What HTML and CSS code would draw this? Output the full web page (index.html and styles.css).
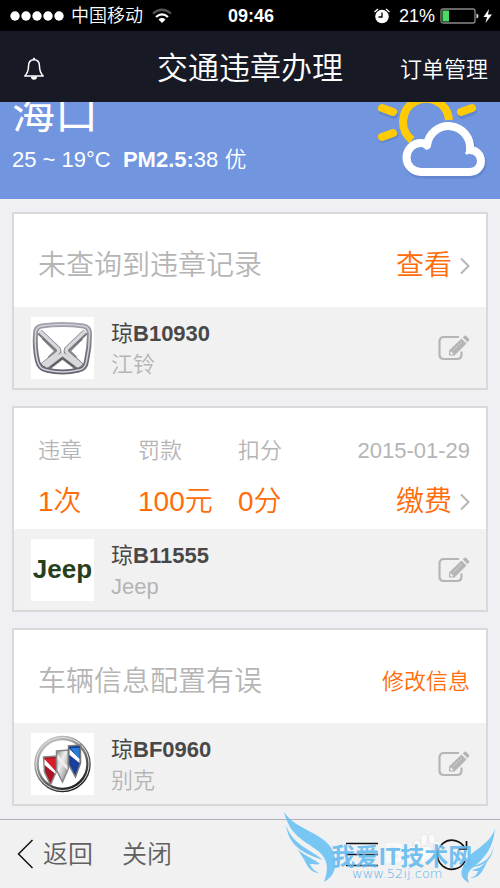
FILE: index.html
```html
<!DOCTYPE html>
<html lang="zh-CN">
<head>
  <meta charset="UTF-8">
  <meta name="viewport" content="width=device-width, initial-scale=1.0">
  <title>交通违章办理</title>
  <link rel="stylesheet" href="styles.css">
</head>
<body>
  <!-- shared icons -->
  <svg class="sprite" aria-hidden="true">
    <symbol id="icon-edit" viewBox="0 0 32 26">
      <path d="M21 2H6Q1.500 2 1.500 6.500v13q0 4.500 4.500 4.500h13q4.500 0 4.500-4.500v-3" fill="none" stroke="#b5b5b5" stroke-width="2.200"/>
      <path d="M11 15.500 23.500 3.500l5 5L16.500 20.500H11z" fill="#b5b5b5"/>
      <path d="m24.800 2.500 1.300-1.400q1-1 2.200 0l2.500 2.500q1 1.200 0 2.200L29.600 7.200z" fill="#b5b5b5"/>
      <path d="m12.500 16 3 3-1 .5h-1.500l-.8-1z" fill="#f1f1f1"/>
      <path d="m15.500 15 8.500-8" stroke="#d8d8d8" stroke-width=".8"/>
    </symbol>
    <symbol id="icon-next" viewBox="0 0 10 18">
      <path d="m1 1.500 7.500 7.500L1 16.500" fill="none" stroke="#b5b5b5" stroke-width="2"/>
    </symbol>
  </svg>

  <div class="status-bar">
    <div class="status-left">
      <svg width="54" height="12" viewBox="0 0 54 12" fill="#fff">
        <circle cx="5" cy="6" r="4.700"/><circle cx="16" cy="6" r="4.700"/><circle cx="27" cy="6" r="4.700"/><circle cx="38" cy="6" r="4.700"/><circle cx="49" cy="6" r="4.700"/>
      </svg>
      <span class="carrier">中国移动</span>
      <svg width="20" height="16" viewBox="0 0 20 16" fill="none" stroke-width="2.200">
        <path d="M1 5.500Q10-2 19 5.500" stroke="#555"/>
        <path d="M4 9q6-5.400 12 0" stroke="#fff"/>
        <path d="m10 15-3.500-3.500q3.500-2.800 7 0z" fill="#fff"/>
      </svg>
    </div>
    <time class="clock">09:46</time>
    <div class="status-right">
      <svg width="16" height="16" viewBox="0 0 16 16">
        <circle cx="8" cy="8.500" r="6.800" fill="#fff"/>
        <path d="M.5 4 4 1M15.500 4 12 1" stroke="#fff" stroke-width="1.300"/>
        <path d="M8 4.500V9H4.500" fill="none" stroke="#000" stroke-width="1.300"/>
      </svg>
      <span class="percent">21%</span>
      <svg width="39" height="16" viewBox="0 0 39 16">
        <rect x="1" y="1" width="34" height="14" rx="2" fill="none" stroke="#8a8a8a" stroke-width="1.300"/>
        <path d="M2.500 2.500H9v11H2.500z" fill="#4cd964"/>
        <path d="M36.500 5.500q2 .5 2 2.500t-2 2.500z" fill="#ddd"/>
      </svg>
      <svg width="9" height="14" viewBox="0 0 9 14"><path d="M6 0 .5 8H4l-1.500 6L9 5.500H5z" fill="#fff"/></svg>
    </div>
  </div>

  <header class="header">
    <button class="bell" aria-label="消息">
      <svg width="22" height="24" viewBox="0 0 22 24">
        <path d="M11 2.800c-4 0-5.500 3-5.500 6.500 0 5-1.500 7.500-3.700 9.700h18.400c-2.200-2.200-3.700-4.700-3.700-9.700 0-3.500-1.500-6.500-5.500-6.500z" fill="none" stroke="#fff" stroke-width="1.500" stroke-linejoin="round"/>
        <path d="M8 19.500a3 3.200 0 0 0 6 0z" fill="#fff"/><circle cx="11" cy="2" r="1.200" fill="#fff"/>
      </svg>
    </button>
    <h1>交通违章办理</h1>
    <a href="#" class="orders">订单管理</a>
  </header>

  <main class="content">
    <!-- weather -->
    <section class="weather">
      <div>
        <div class="city">海口</div>
        <div class="temp">25 ~ 19°C&nbsp; <b>PM2.5:</b>38 优</div>
      </div>
      <svg class="weather-icon" width="112" height="112" viewBox="376 69 112 112">
        <g fill="none" stroke="#4d6ba8" stroke-opacity=".35" stroke-linecap="round" transform="translate(1 2)">
          <path d="m382 109 11 4M382 137l11-4M461 113l11-4" stroke-width="8"/>
          <path d="M421 172a14.500 14.500 0 0 1 0-29q4 0 6 2.500A21.500 21.500 0 0 1 470 150a11 11 0 0 1 0 22z" stroke-width="9"/>
        </g>
        <g fill="none" stroke="#ffcb05" stroke-linecap="round">
          <path d="m382 108 11 4M382 137l11-4M461 112l11-4" stroke-width="8"/>
          <path d="M412 140A23 23 0 1 1 449 120" stroke-width="8" stroke-linecap="butt"/>
        </g>
        <path d="M421 172a14.500 14.500 0 0 1 0-29q4 0 6 2.500A21.500 21.500 0 0 1 470 150a11 11 0 0 1 0 22z" fill="#7195df" stroke="#fff" stroke-width="8" stroke-linejoin="round"/>
        <path d="m425 143 3 6M470 149l-4 5" stroke="#fff" stroke-width="3"/>
      </svg>
    </section>

    <!-- vehicles -->
    <section class="cards">
      <article class="card">
        <div class="card-top">
          <p class="message">未查询到违章记录</p>
          <a href="#" class="action">查看 <svg width="10" height="18"><use href="#icon-next"/></svg></a>
        </div>
        <div class="vehicle">
          <svg class="brand" viewBox="0 0 62 62">
            <defs>
              <linearGradient id="chrome" x2="0" y2="1"><stop stop-color="#a2a2aa"/><stop offset=".5" stop-color="#777782"/><stop offset="1" stop-color="#64646e"/></linearGradient>
            </defs>
            <g fill="none">
              <path d="m8 15 17 16q4 3 0 6L11 49M54 15 37 31q-4 3 0 6l13 12M14 52l17-13 17 13" stroke="#77777f" stroke-width="6"/>
              <path d="m8 14 18 17q3 3-1 6L11 48M54 14 36 31q-3 3 1 6l13 11M14 50l17-13 17 13" stroke="#d8d8dc" stroke-width="3.500"/>
              <path d="M11 22 23 34l-6 6M51 22 39 34l6 6M19 50l12-9 12 9" stroke="#4c4c50" stroke-width="1"/>
              <path d="M10 9q21-3 42 0 6 1 6 8 0 14-3 27-1 8-8 9-16 4-32 0-7-1-9-9-3-13-2-27 0-7 6-8z" stroke="url(#chrome)" stroke-width="5"/>
              <path d="M10 9q21-3 42 0 6 1 6 8 0 14-3 27-1 8-8 9-16 4-32 0-7-1-9-9-3-13-2-27 0-7 6-8z" stroke="#d0d0d8" stroke-width="1.500"/>
            </g>
          </svg>
          <div class="info">
            <h2><span>琼</span>B10930</h2>
            <p>江铃</p>
          </div>
          <button class="edit" aria-label="编辑"><svg width="32" height="26"><use href="#icon-edit"/></svg></button>
        </div>
      </article>

      <article class="card">
        <div class="card-top stats">
          <dl>
            <div><dt>违章</dt><dd>1次</dd></div>
            <div><dt>罚款</dt><dd>100元</dd></div>
            <div><dt>扣分</dt><dd>0分</dd></div>
          </dl>
          <div class="pay">
            <time>2015-01-29</time>
            <a href="#" class="action">缴费 <svg width="10" height="18"><use href="#icon-next"/></svg></a>
          </div>
        </div>
        <div class="vehicle">
          <div class="brand brand-jeep">Jeep</div>
          <div class="info">
            <h2><span>琼</span>B11555</h2>
            <p>Jeep</p>
          </div>
          <button class="edit" aria-label="编辑"><svg width="32" height="26"><use href="#icon-edit"/></svg></button>
        </div>
      </article>

      <article class="card">
        <div class="card-top">
          <p class="message">车辆信息配置有误</p>
          <a href="#" class="action action-small">修改信息</a>
        </div>
        <div class="vehicle">
          <svg class="brand" viewBox="0 0 62 62">
            <defs>
              <linearGradient id="ring" x1="0" y1="0" x2=".6" y2="1"><stop stop-color="#d5d5d5"/><stop offset=".5" stop-color="#8a8a8a"/><stop offset="1" stop-color="#222"/></linearGradient>
              <linearGradient id="silver" x2="1" y2="1"><stop stop-color="#8c8c8c"/><stop offset=".4" stop-color="#eee"/><stop offset="1" stop-color="#777"/></linearGradient>
            </defs>
            <circle cx="31" cy="31" r="26" fill="#fff" stroke="url(#ring)" stroke-width="4.500"/>
            <circle cx="31" cy="31" r="26.500" fill="none" stroke="#e2e2e2" stroke-width="1"/>
            <path d="m12 24 13-1v15l-6 14-6-13z" fill="#a91522" stroke="#888" stroke-width="1.500"/>
            <path d="m14 26 10 12v-13z" fill="#d91c2a"/><path d="m13 26 11 12v3L13 32z" fill="#fff"/>
            <path d="m25 18 12-1v18l-6 14-6-12z" fill="url(#silver)" stroke="#858585" stroke-width="1.500"/>
            <path d="m26 21 10 12v4L26 27z" fill="#eee"/>
            <path d="m37 13 12-1v18l-5 14-7-13z" fill="#173f9b" stroke="#777" stroke-width="1.500"/>
            <path d="M39 15h9v12z" fill="#287dd3"/><path d="m38 16 10 10v4L38 22z" fill="#fff"/>
          </svg>
          <div class="info">
            <h2><span>琼</span>BF0960</h2>
            <p>别克</p>
          </div>
          <button class="edit" aria-label="编辑"><svg width="32" height="26"><use href="#icon-edit"/></svg></button>
        </div>
      </article>
    </section>
  </main>

  <nav class="toolbar">
    <a href="#" class="back"><svg width="17" height="30" viewBox="0 0 17 30"><path d="M15.500 1 1.500 15l14 14" fill="none" stroke="#111" stroke-width="1.500"/></svg>返回</a>
    <a href="#">关闭</a>
    <button class="menu" aria-label="菜单">
      <svg width="32" height="26" viewBox="0 0 32 26"><path d="M0 2.500h32M0 13.500h32M0 24.500h32" stroke="#111" stroke-width="1.700"/></svg>
    </button>
    <button class="refresh" aria-label="刷新">
      <svg width="32" height="34" viewBox="0 0 32 34"><path d="M29 11.500A14.500 14.500 0 1 0 29 24M30.500 4v8h-8" fill="none" stroke="#111" stroke-width="1.700"/></svg>
    </button>
    <svg class="watermark" width="216" height="80" viewBox="0 0 216 80">
      <g fill="#fff" stroke="#ddd" stroke-width=".8" opacity=".85">
        <ellipse cx="133" cy="33" rx="4" ry="5"/><ellipse cx="140" cy="27" rx="3.500" ry="5"/><ellipse cx="148" cy="27" rx="3.500" ry="5"/><ellipse cx="153" cy="34" rx="3.500" ry="5"/>
        <path d="M143 34c-5 0-7 5-9 8-2 5 2 7 9 6 7 1 10-2 8-6-2-4-4-8-8-8z"/>
      </g>
      <text class="mark-faint" x="100" y="50">Bai</text>
      <g fill="#62bff5">
        <path d="M0 0c12 19 44 21 50 42 4 14-1 23-10 28 5-14 4-23-6-31C20 28 6 24 0 0z"/>
        <path d="M2 13c6 20 26 25 37 35-18-6-34-13-37-35zM13 37c8 7 17 10 23 15-4 1-8 0-10 0 2 5 5 7 9 9-12-1-11-10-22-24z"/>
        <path d="M211 17c-7 18-22 19-29 32-7 11-6 17 3 22-3-9-1-12 7-18 9-8 17-17 19-36z"/>
        <path d="M210 33c-3 15-12 18-22 22 13-1 20-7 22-22zM204 48c-5 6-10 9-16 10 2 1 4 1 6 1-1 4-4 6-8 7 10 0 12-6 18-18z"/>
      </g>
      <text class="mark-name" x="47" y="53">我爱IT技术网</text>
      <text class="mark-url" x="68" y="66">www.52ij.com</text>
    </svg>
  </nav>
</body>
</html>
```
FILE: styles.css
```css
* {
  box-sizing: border-box;
}

body {
  margin: 0;
  height: 100vh;
  display: flex;
  flex-direction: column;
  font-family: "Liberation Sans", "Noto Sans CJK SC", sans-serif;
  font-size: 22px;
  font-weight: 350;
  line-height: 32px;
  background: #efeff4;
  color: #b5b5b5;
}

h1, h2, p, dl, dd {
  margin: 0;
}

a {
  color: inherit;
  text-decoration: none;
}

b {
  font-weight: bold;
}

button {
  padding: 0;
  border: none;
  background: none;
  cursor: pointer;
}

svg {
  display: block;
  flex-shrink: 0;
}

.sprite {
  position: absolute;
  width: 0;
  height: 0;
}

/* status bar */
.status-bar {
  display: grid;
  grid-template-columns: 1fr auto 1fr;
  align-items: center;
  flex-shrink: 0;
  height: 31px;
  padding: 0 8px 0 10px;
  background: #000;
  color: #fff;
  font-size: 18px;
}

.status-left, .status-right {
  display: flex;
  align-items: center;
}

.status-right {
  justify-content: flex-end;
}

.carrier {
  margin: 0 9px 0 7px;
}

.clock {
  font-weight: bold;
}

.percent {
  margin: 0 5px 0 9px;
}

.status-right svg:last-child {
  margin-left: 4px;
}

/* header */
.header {
  display: grid;
  grid-template-columns: 1fr auto 1fr;
  align-items: center;
  flex-shrink: 0;
  height: 71px;
  padding: 5px 12px 0;
  background: #171a25;
  color: #fff;
}

.header h1 {
  font-size: 31px;
  font-weight: 350;
}

.bell {
  justify-self: start;
  margin-left: 11px;
}

.orders {
  justify-self: end;
  padding-top: 2px;
}

.content {
  flex: 1;
  min-height: 0;
  overflow: hidden;
}

/* weather, scrolled partly under the header */
.weather {
  display: flex;
  justify-content: space-between;
  align-items: flex-end;
  height: 137px;
  margin-top: -40px;
  padding: 0 12px 18px;
  background: #7195df;
  color: #fff;
}

.city {
  font-size: 43px;
  font-weight: 400;
  line-height: 56px;
  margin-bottom: 2px;
}

.temp {
  margin-bottom: 5px;
}

/* vehicle cards */
.cards {
  display: flex;
  flex-direction: column;
  gap: 16px;
  padding: 13px 12px;
}

.card {
  border: 2px solid #d9d9d9;
  background: #fff;
}

.card-top {
  display: flex;
  justify-content: space-between;
  align-items: center;
  padding: 33px 16px 22px 24px;
}

.message {
  font-size: 28px;
  line-height: 38px;
}

.action {
  display: flex;
  align-items: center;
  justify-content: flex-end;
  gap: 8px;
  font-size: 28px;
  line-height: 38px;
  color: #ff6c0a;
}

.action-small {
  font-size: 22px;
}

.stats {
  padding: 27px 16px 8px 24px;
}

.stats dl {
  display: flex;
}

.stats dl div {
  width: 100px;
}

.stats dt, .pay time {
  display: block;
  margin-bottom: 16px;
}

.stats dd {
  font-size: 28px;
  line-height: 38px;
  color: #ff6c0a;
}

.vehicle {
  display: flex;
  align-items: center;
  height: 81px;
  padding: 0 16px 0 17px;
  background: #f1f1f1;
}

.brand {
  width: 63px;
  height: 62px;
  background: #fff;
}

.brand-jeep {
  font-size: 26px;
  font-weight: bold;
  line-height: 60px;
  text-align: center;
  color: #27401c;
}

.info {
  flex: 1;
  margin-left: 17px;
  padding-top: 3px;
}

.info h2 {
  font-size: 22px;
  font-weight: bold;
  line-height: 31px;
  color: #484848;
}

.info h2 span {
  font-weight: 400;
}

.info p {
  line-height: 31px;
}

/* bottom toolbar */
.toolbar {
  position: relative;
  display: flex;
  align-items: center;
  flex-shrink: 0;
  height: 69px;
  padding: 0 32px 0 17px;
  border-top: 1px solid #b2b2b2;
  background: #f1f1f1;
  color: #606060;
  font-size: 25px;
}

.back {
  display: flex;
  align-items: center;
  gap: 9px;
  margin-right: 29px;
}

.menu {
  margin-left: auto;
}

.refresh {
  margin-left: 58px;
}

.watermark {
  position: absolute;
  right: 0;
  bottom: -4px;
  overflow: visible;
  opacity: 0.85;
  pointer-events: none;
}

.mark-faint {
  font-size: 28px;
  font-weight: bold;
  fill: #fff;
  opacity: 0.8;
}

.mark-name {
  font-size: 24px;
  font-weight: bold;
  fill: #5cb8f0;
}

.mark-url {
  font-family: "DejaVu Sans", sans-serif;
  font-size: 13px;
  fill: #3fa9e8;
}
```
